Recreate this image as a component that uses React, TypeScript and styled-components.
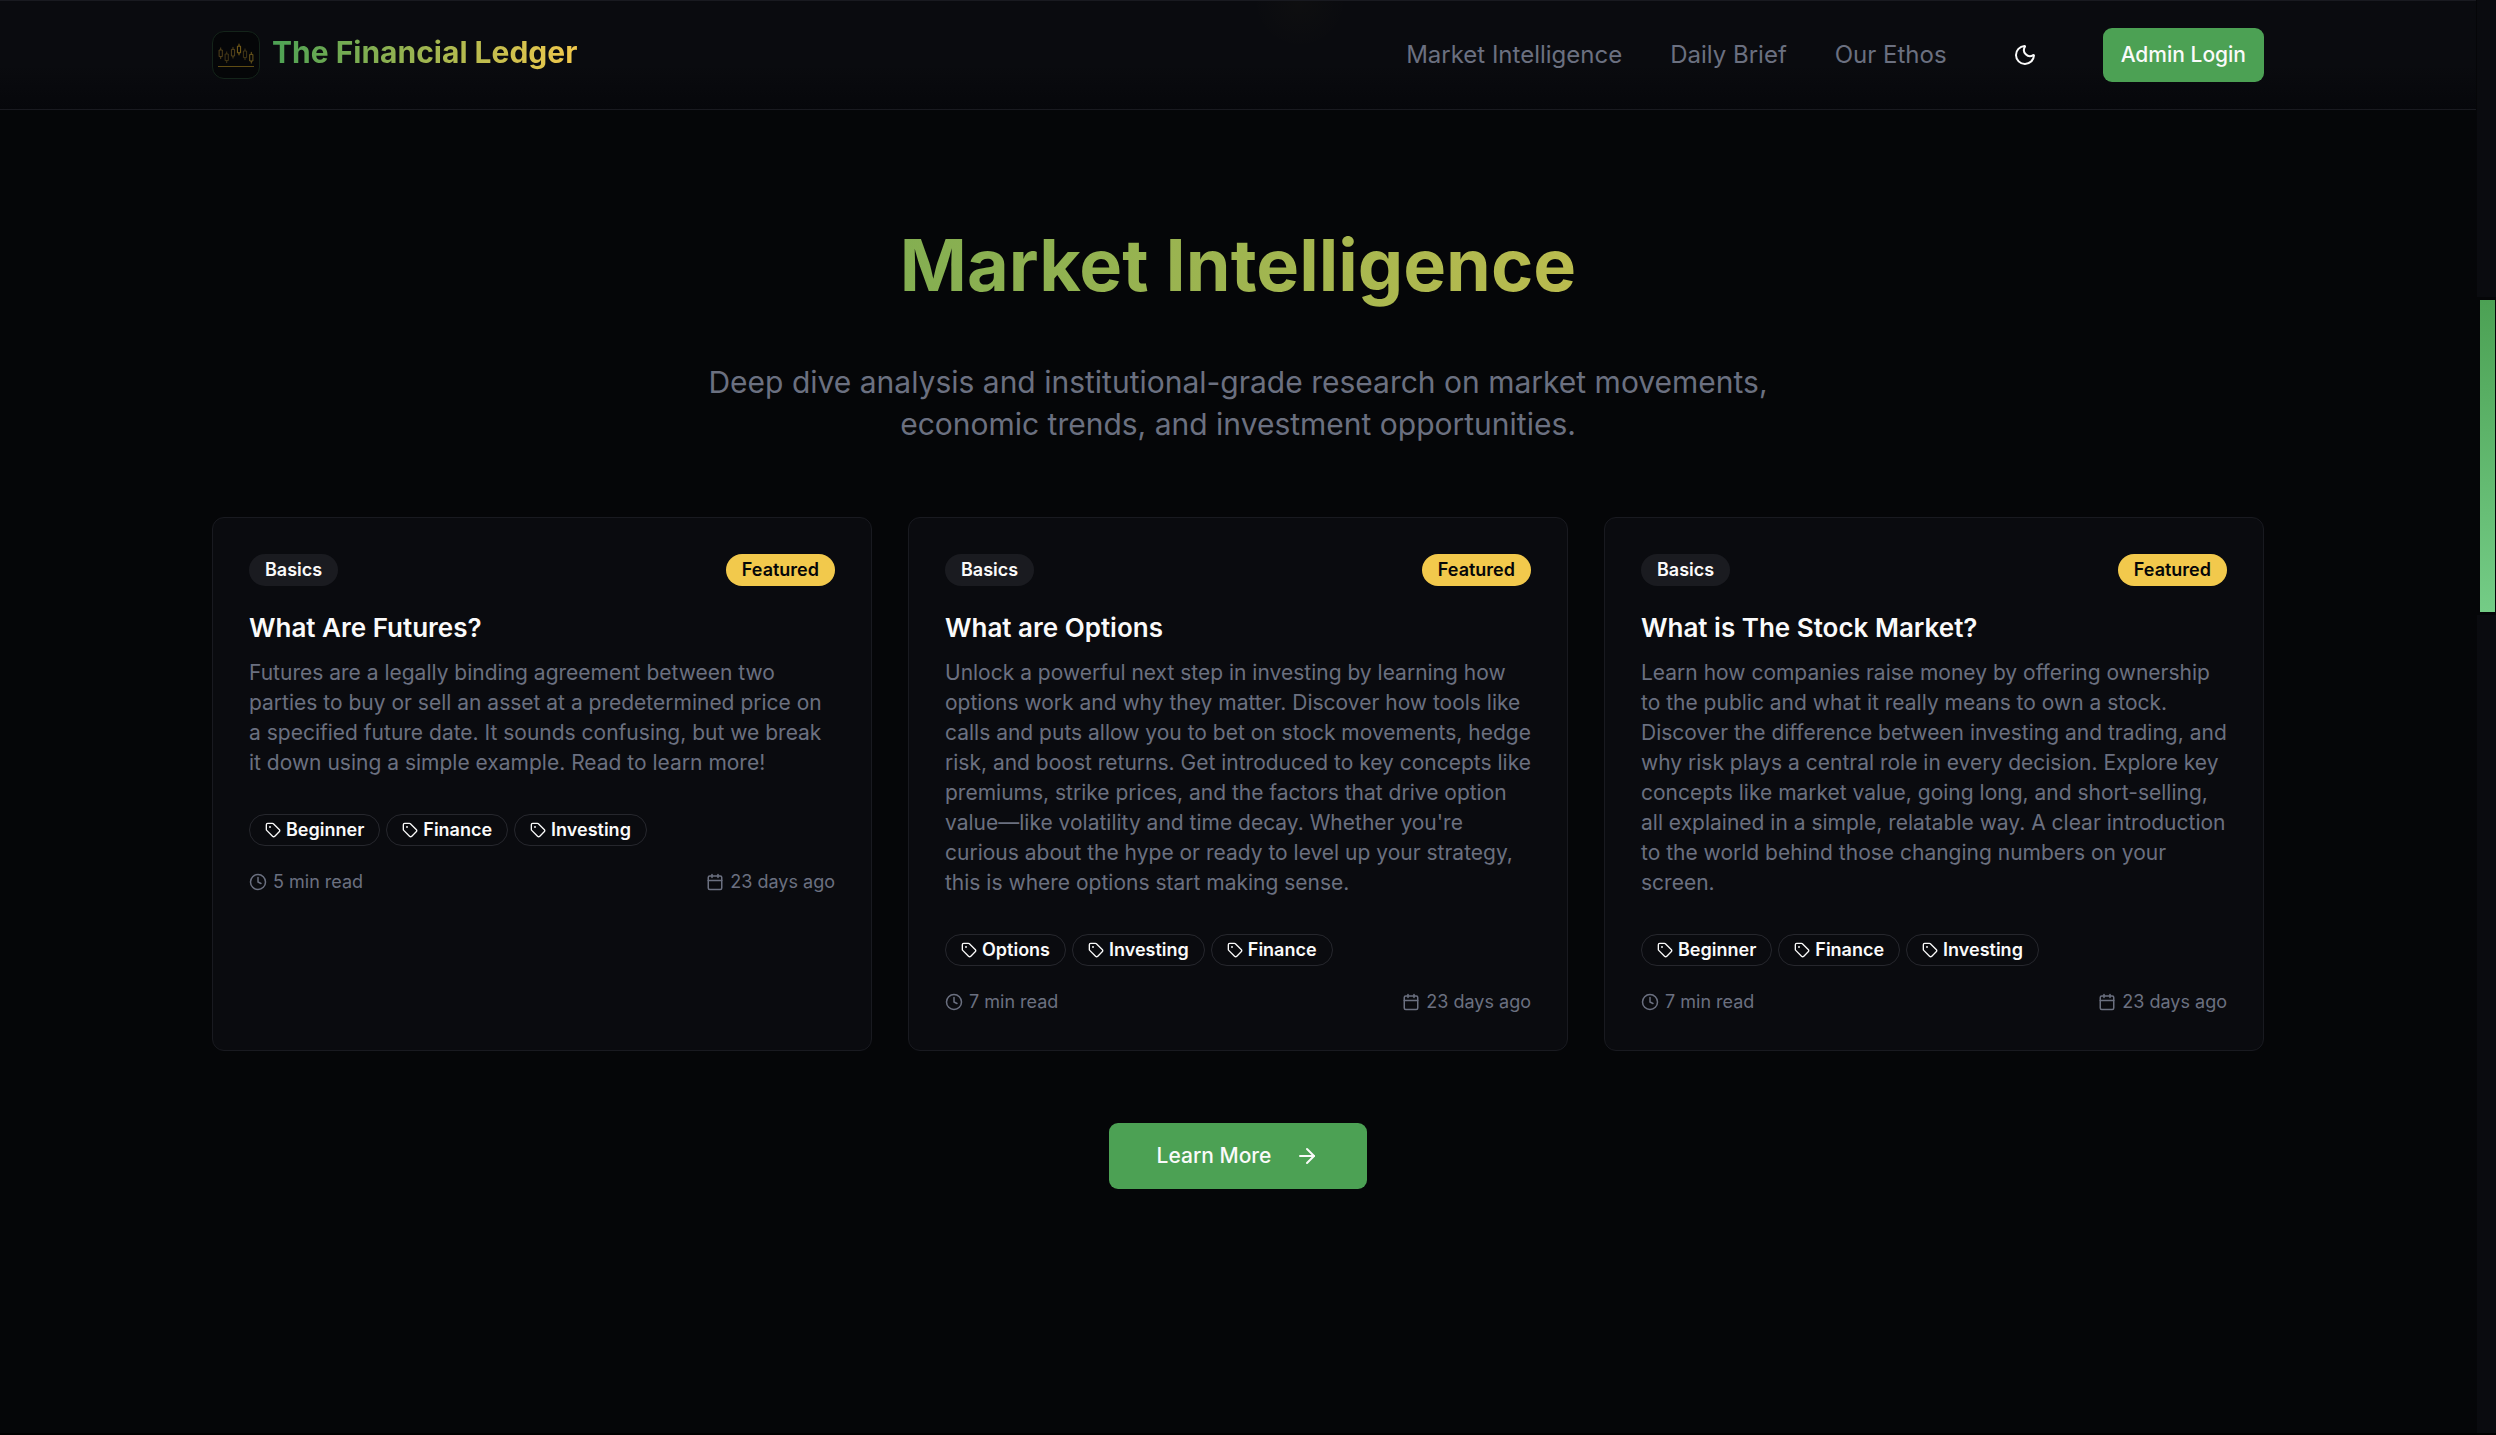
import React from "react";
import styled, { createGlobalStyle, css } from "styled-components";
import { ArrowRight, Calendar, Clock, Moon, Tag } from "lucide-react";

const GlobalStyle = createGlobalStyle`
  *, *::before, *::after { box-sizing: border-box; }
  body {
    margin: 0;
    background: #050608;
    color: #fafafa;
    font-family: Inter, "Noto Sans", sans-serif;
    font-size: 24px;
    line-height: 36px;
  }
  h1, h2, p, ul { margin: 0; padding: 0; }
  button { font: inherit; border: 0; cursor: pointer; }
  a { color: inherit; text-decoration: none; }
`;

const Shell = styled.div`
  display: grid;
  grid-template-columns: minmax(0, 1fr) 20px;
  min-height: 100vh;
  border-bottom: 2px solid #000;
`;

const Page = styled.div`
  display: flex;
  flex-direction: column;
`;

const Rail = styled.div`
  padding-top: 297px;
  border-left: 1px solid #050608;
  background: #0a0b0f;
`;

const Thumb = styled.div`
  height: 318px;
  border: 3px solid #050608;
  border-right-width: 1px;
  background: linear-gradient(180deg, #4ca154, #74cc86);
`;

const Container = styled.div`
  width: 100%;
  max-width: 2100px;
  margin: 0 auto;
  padding: 0 24px;
`;

const Header = styled.header`
  border: 1px solid #191a20;
  border-width: 1px 0;
  box-shadow: 1px 0 #191a20;
  background:
    radial-gradient(circle at 1300px 0, rgba(242, 201, 76, 0.02), transparent 48px),
    linear-gradient(180deg, #0a0b0f 60%, #06070b);
`;

const HeaderRow = styled(Container)`
  display: flex;
  align-items: center;
  justify-content: space-between;
  height: 108px;
`;

const Brand = styled.a`
  display: flex;
  align-items: center;
  gap: 12px;
`;

const LogoBox = styled.span`
  display: grid;
  place-items: center;
  width: 48px;
  height: 48px;
  border: 1px solid #14241a;
  border-radius: 12px;
  background: #050608;
`;

const BrandName = styled.span`
  padding-bottom: 6px;
  font-size: 30px;
  font-weight: 700;
  background: linear-gradient(90deg, #4ca154, #f2c94c);
  background-clip: text;
  color: transparent;
`;

const Nav = styled.nav`
  display: flex;
  align-items: center;
  gap: 48px;
  color: #6b7080;
`;

const buttonBase = css`
  display: inline-flex;
  align-items: center;
  justify-content: center;
  border-radius: 9px;
`;

const IconButton = styled.button`
  ${buttonBase}
  width: 60px;
  height: 60px;
  padding: 0;
  background: transparent;
  color: #fafafa;
`;

const PrimaryButton = styled.button<{ $large?: boolean }>`
  ${buttonBase}
  gap: 24px;
  height: ${(p) => (p.$large ? 66 : 54)}px;
  padding: 0 ${(p) => (p.$large ? 48 : 18)}px;
  background: #4ca154;
  color: #fafafa;
  font-size: 21px;
  font-weight: 500;
`;

const Section = styled(Container).attrs({ as: "main" })`
  display: flex;
  flex-direction: column;
  align-items: center;
  padding-top: 110px;
`;

const Heading = styled.h1`
  width: 100%;
  font-size: 72px;
  line-height: 90px;
  font-weight: 700;
  text-align: center;
  background: linear-gradient(90deg, #4ca154, #f2c94c);
  background-clip: text;
  color: transparent;
`;

const Lead = styled.p`
  max-width: 1152px;
  margin-top: 51px;
  color: #6b7080;
  font-size: 30px;
  line-height: 42px;
  text-align: center;
`;

const Cards = styled.div`
  display: grid;
  grid-template-columns: repeat(3, minmax(0, 1fr));
  gap: 36px;
  width: 100%;
  margin: 72px 0;
`;

const Card = styled.article`
  padding: 36px;
  border: 1px solid #191a20;
  border-radius: 12px;
  background: #0a0b0f;
`;

const Split = styled.div`
  display: flex;
  align-items: center;
  justify-content: space-between;
`;

const Badge = styled.span<{ $tone: "muted" | "gold" | "outline" }>`
  display: inline-flex;
  align-items: center;
  gap: 5px;
  height: 32px;
  padding: 0 15px;
  border: 1px solid ${(p) => (p.$tone === "outline" ? "#26272d" : "transparent")};
  border-radius: 16px;
  background: ${(p) => ({ muted: "#1a1b20", gold: "#f2c94c", outline: "transparent" })[p.$tone]};
  color: ${(p) => (p.$tone === "gold" ? "#050608" : "#fafafa")};
  font-size: 18px;
  line-height: 24px;
  font-weight: 600;
`;

const CardTitle = styled.h2`
  margin-top: 21px;
  font-size: 26px;
  line-height: 42px;
  font-weight: 600;
`;

const CardText = styled.p`
  margin-top: 9px;
  color: #6b7080;
  font-size: 21px;
  line-height: 30px;
`;

const Tags = styled.ul`
  display: flex;
  gap: 6px;
  margin: 36px 0 24px;
  list-style: none;
`;

const TagItem = styled.li`
  display: flex;
`;

const Meta = styled.span`
  display: inline-flex;
  align-items: center;
  gap: 6px;
  color: #6b7080;
  font-size: 18px;
  line-height: 24px;
`;

const articles = [
  {
    title: "What Are Futures?",
    text: "Futures are a legally binding agreement between two parties to buy or sell an asset at a predetermined price on a specified future date. It sounds confusing, but we break it down using a simple example. Read to learn more!",
    tags: ["Beginner", "Finance", "Investing"],
    read: "5 min read",
  },
  {
    title: "What are Options",
    text: "Unlock a powerful next step in investing by learning how options work and why they matter. Discover how tools like calls and puts allow you to bet on stock movements, hedge risk, and boost returns. Get introduced to key concepts like premiums, strike prices, and the factors that drive option value—like volatility and time decay. Whether you're curious about the hype or ready to level up your strategy, this is where options start making sense.",
    tags: ["Options", "Investing", "Finance"],
    read: "7 min read",
  },
  {
    title: "What is The Stock Market?",
    text: "Learn how companies raise money by offering ownership to the public and what it really means to own a stock. Discover the difference between investing and trading, and why risk plays a central role in every decision. Explore key concepts like market value, going long, and short-selling, all explained in a simple, relatable way. A clear introduction to the world behind those changing numbers on your screen.",
    tags: ["Beginner", "Finance", "Investing"],
    read: "7 min read",
  },
];

/* centre x, centre y and stroke of each candle */
const candles: [number, number, string][] = [
  [7.7, 21.3, "#5c4a1e"],
  [13.7, 25.3, "#4a3c19"],
  [20, 20.7, "#5c4a1e"],
  [26, 17.5, "#8a6c1c"],
  [32, 22.3, "#4a3c19"],
  [38.3, 25.7, "#75601f"],
];

function Logo() {
  return (
    <svg width="46" height="46" viewBox="0 0 46 46" fill="none" aria-hidden="true">
      {candles.map(([x, y, stroke]) => (
        <path
          key={x}
          d={`M${x - 1.6} ${y - 3.3}h3.2v6.6h-3.2zM${x} ${y - 5.8}v2.5M${x} ${y + 3.3}v2.5`}
          stroke={stroke}
          strokeWidth="0.9"
        />
      ))}
      <path d="M5 34.5h36" stroke="#5f4c14" />
    </svg>
  );
}

export default function App() {
  return (
    <>
      <GlobalStyle />
      <Shell>
        <Page>
          <Header>
            <HeaderRow>
              <Brand href="#">
                <LogoBox>
                  <Logo />
                </LogoBox>
                <BrandName>The Financial Ledger</BrandName>
              </Brand>
              <Nav>
                <a href="#intelligence">Market Intelligence</a>
                <a href="#brief">Daily Brief</a>
                <a href="#ethos">Our Ethos</a>
                <IconButton aria-label="Toggle theme">
                  <Moon size={24} />
                </IconButton>
                <PrimaryButton>Admin Login</PrimaryButton>
              </Nav>
            </HeaderRow>
          </Header>
          <Section>
            <Heading>Market Intelligence</Heading>
            <Lead>
              Deep dive analysis and institutional-grade research on market movements, economic trends, and investment
              opportunities.
            </Lead>
            <Cards>
              {articles.map((a) => (
                <Card key={a.title}>
                  <Split>
                    <Badge $tone="muted">Basics</Badge>
                    <Badge $tone="gold">Featured</Badge>
                  </Split>
                  <CardTitle>{a.title}</CardTitle>
                  <CardText>{a.text}</CardText>
                  <Tags>
                    {a.tags.map((t) => (
                      <TagItem key={t}>
                        <Badge $tone="outline">
                          <Tag size={16} />
                          {t}
                        </Badge>
                      </TagItem>
                    ))}
                  </Tags>
                  <Split>
                    <Meta>
                      <Clock size={18} />
                      {a.read}
                    </Meta>
                    <Meta>
                      <Calendar size={18} />
                      23 days ago
                    </Meta>
                  </Split>
                </Card>
              ))}
            </Cards>
            <PrimaryButton $large>
              Learn More
              <ArrowRight size={24} />
            </PrimaryButton>
          </Section>
        </Page>
        <Rail>
          <Thumb />
        </Rail>
      </Shell>
    </>
  );
}
